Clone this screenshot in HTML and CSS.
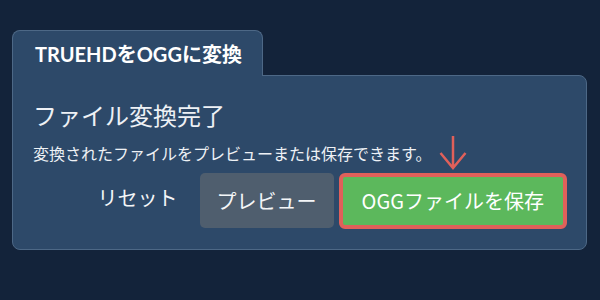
FILE: index.html
```html
<!DOCTYPE html>
<html lang="ja">
<head>
    <title>TRUEHDをOGGに変換</title>
    <link rel="stylesheet" href="styles.css">
</head>
<body>
    <div class="converter">
        <div class="tab">TRUEHDをOGGに変換</div>
        <div class="panel">
            <h2 class="title">ファイル変換完了</h2>
            <p class="message">変換されたファイルをプレビューまたは保存できます。</p>
            <div class="actions">
                <button class="btn-text">リセット</button>
                <button class="btn-gray">プレビュー</button>
                <div class="save-wrap">
                    <svg class="hint-arrow" width="28" height="34" viewBox="0 0 28 34">
                        <path d="M14 0 V32 M1.5 17 L14 32 L26.5 17" fill="none" stroke="#e0605a" stroke-width="2.5"/>
                    </svg>
                    <button class="btn-green">OGGファイルを保存</button>
                </div>
            </div>
        </div>
    </div>
</body>
</html>
```

FILE: styles.css
```css
body {
    margin: 0;
    background: #13233a;
    font-family: 'Noto Sans CJK JP', sans-serif;
    color: #eef1f5;
}
.converter {
    padding: 30px 12px 0 12px;
    width: 575px;
}
.tab {
    display: inline-block;
    height: 45px;
    line-height: 46px;
    padding: 0 20px 0 22px;
    background: #2d4969;
    border: 1px solid #4d6886;
    border-bottom: none;
    border-radius: 8px 8px 0 0;
    font-family: 'Lato', 'Noto Sans CJK JP', sans-serif;
    font-weight: bold;
    font-size: 20px;
    color: #fff;
    position: relative;
    z-index: 1;
    margin-bottom: -1px;
}
.panel {
    background: #2d4969;
    border: 1px solid #4d6886;
    border-radius: 0 8px 8px 8px;
    padding: 25px 19px 20px 20px;
}
.title {
    margin: 0;
    font-size: 24px;
    font-weight: normal;
    line-height: 1.2;
}
.message {
    margin: 11px 0 0 0;
    font-size: 16px;
    line-height: 24px;
}
.actions {
    display: flex;
    justify-content: flex-end;
    align-items: flex-start;
    gap: 5px;
    margin-top: 8px;
}
button {
    font-family: 'Noto Sans CJK JP', sans-serif;
    font-size: 20px;
    height: 55px;
    padding: 0 17px;
    border: none;
    border-radius: 5px;
    color: #f4f6f8;
    cursor: pointer;
}
.btn-text {
    background: none;
    padding: 0 17px;
    margin-top: -3px;
}
.btn-gray {
    background: #4f5e6e;
}
.save-wrap {
    position: relative;
}
.hint-arrow {
    position: absolute;
    left: 50%;
    top: -37px;
    margin-left: -14px;
}
.btn-green {
    height: 56px;
    background: #5cb85c;
    border: 4px solid #e0605a;
    border-radius: 6px;
    padding: 0 19px;
    color: #fff;
}
```
